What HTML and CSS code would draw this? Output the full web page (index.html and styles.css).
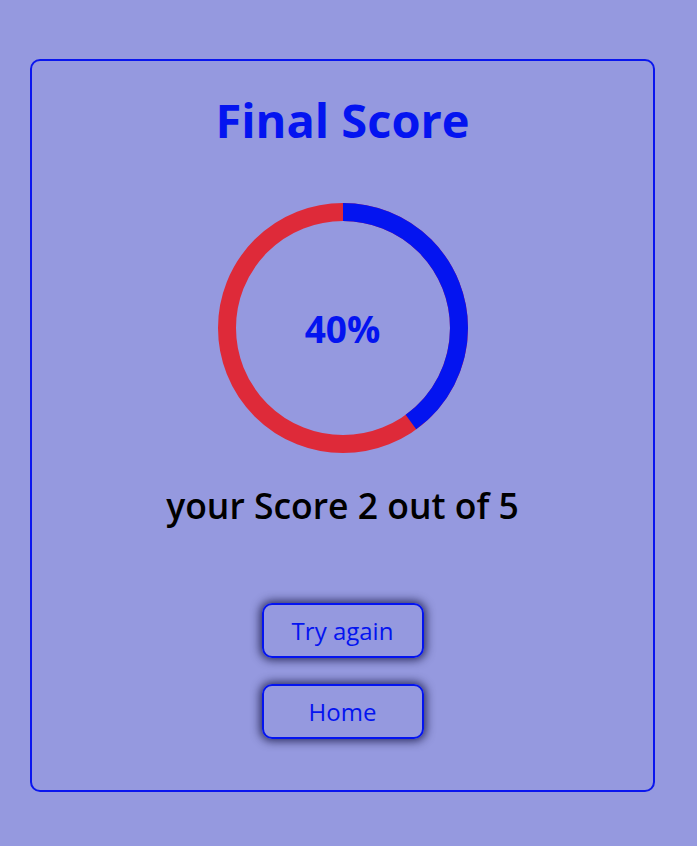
FILE: index.html
```html
<!DOCTYPE html>
<html lang="en">
<head>
<meta charset="utf-8">
<title>Final Score</title>
<link rel="stylesheet" href="styles.css">
</head>
<body>
<div class="card">
  <h1 class="title">Final Score</h1>
  <div class="ring">
    <svg width="250" height="250" viewBox="0 0 250 250">
      <circle cx="125" cy="125" r="116" fill="none" stroke="#de2a39" stroke-width="18"/>
      <circle cx="125" cy="125" r="116" fill="none" stroke="#0414f0" stroke-width="18" stroke-dasharray="291.54 728.85" transform="rotate(-90 125 125)"/>
    </svg>
    <div class="pct">40%</div>
  </div>
  <p class="score">your Score 2 out of 5</p>
  <div class="actions">
    <button class="btn">Try again</button>
    <button class="btn">Home</button>
  </div>
</div>
</body>
</html>
```
FILE: styles.css
```css
html, body {
  margin: 0;
  padding: 0;
  background: #9599df;
}
body {
  font-family: "Open Sans", "Noto Sans", sans-serif;
  padding-top: 59px;
}
.card {
  box-sizing: border-box;
  width: 625px;
  margin-left: 30px;
  border: 2px solid #0a16ee;
  border-radius: 10px;
  padding: 28px 0 51px;
  display: flex;
  flex-direction: column;
  align-items: center;
}
.title {
  margin: 0;
  font-size: 47px;
  line-height: 62px;
  font-weight: 700;
  color: #0414f0;
}
.ring {
  margin-top: 52px;
  width: 250px;
  height: 250px;
  position: relative;
}
.ring svg {
  display: block;
}
.pct {
  position: absolute;
  inset: 0;
  display: flex;
  align-items: center;
  justify-content: center;
  font-size: 37px;
  font-weight: 700;
  color: #0414f0;
}
.score {
  margin: 30px 0 0;
  font-size: 35.5px;
  line-height: 44px;
  font-weight: 600;
  color: #000;
}
.actions {
  margin-top: 76px;
  display: flex;
  flex-direction: column;
  align-items: center;
  gap: 26px;
}
.btn {
  box-sizing: border-box;
  width: 162px;
  height: 55px;
  border: 2px solid #0414f0;
  border-radius: 10px;
  background: transparent;
  color: #0414f0;
  font-family: inherit;
  font-size: 24px;
  font-weight: 500;
  box-shadow: 0 0 10px 2px rgba(15, 15, 60, 0.8);
  cursor: pointer;
}
```
